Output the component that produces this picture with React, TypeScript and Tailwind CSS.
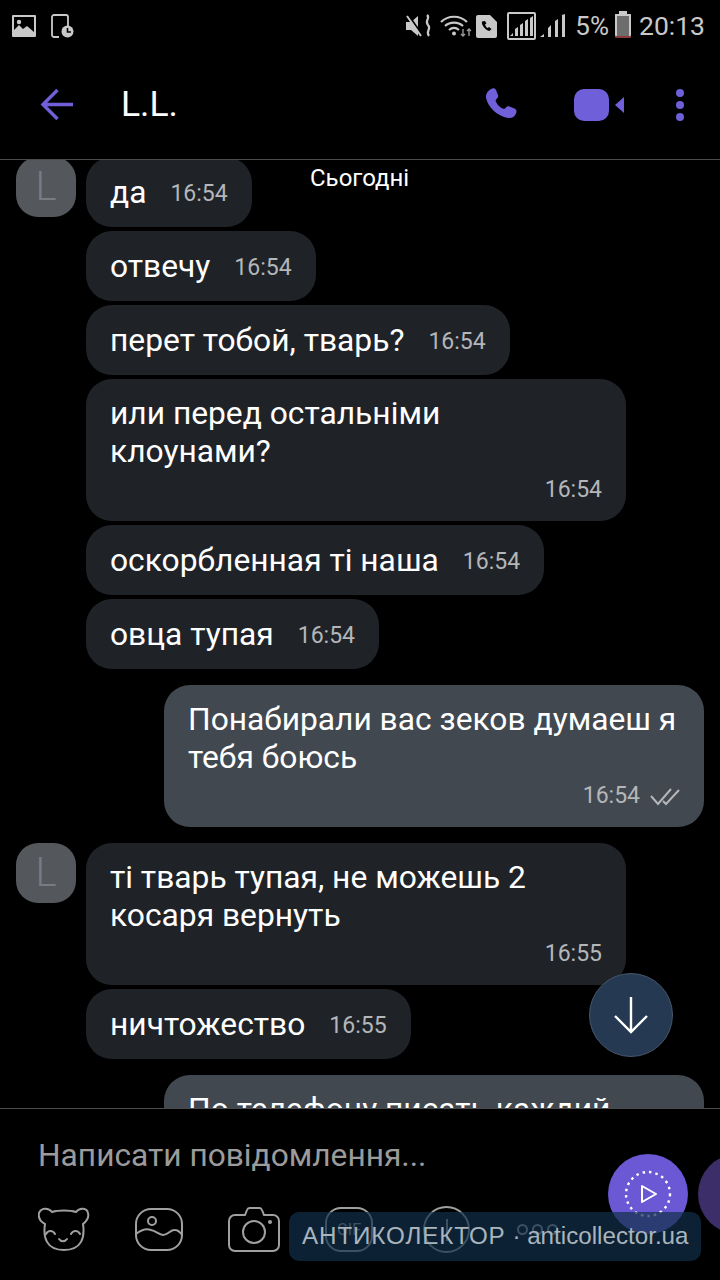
const font = { fontFamily: "Roboto, sans-serif" };

type Msg = { text: string; time: string; wide?: boolean; out?: boolean; avatar?: boolean; read?: boolean };

const messages: Msg[] = [
  { text: "да", time: "16:54", avatar: true },
  { text: "отвечу", time: "16:54" },
  { text: "перет тобой, тварь?", time: "16:54" },
  { text: "или перед остальніми\nклоунами?", time: "16:54", wide: true },
  { text: "оскорбленная ті наша", time: "16:54" },
  { text: "овца тупая", time: "16:54" },
  { text: "Понабирали вас зеков думаеш я\nтебя боюсь", time: "16:54", wide: true, out: true, read: true },
  { text: "ті тварь тупая, не можешь 2\nкосаря вернуть", time: "16:55", wide: true, avatar: true },
  { text: "ничтожество", time: "16:55" },
];

function StatusBar() {
  return (
    <div className="h-[52px] shrink-0 flex items-center justify-between pl-[12px] pr-[15px] text-[#c9c9c9]">
      <div className="flex items-center gap-[15px]">
        <svg width="24" height="22" viewBox="0 0 24 22">
          <path fill="#c9c9c9" fillRule="evenodd" d="M1 0h22a1 1 0 0 1 1 1v20a1 1 0 0 1-1 1H1a1 1 0 0 1-1-1V1a1 1 0 0 1 1-1Zm1 2v13l5-5 4 4 4-3 7 6V2Z" />
          <circle cx="7" cy="7" r="2.2" fill="#c9c9c9" />
        </svg>
        <svg width="23" height="24" viewBox="0 0 23 24">
          <path fill="none" stroke="#c9c9c9" strokeWidth="1.8" d="M8 23H3a2 2 0 0 1-2-2V3a2 2 0 0 1 2-2h12a2 2 0 0 1 2 2v11" />
          <circle cx="16.5" cy="17.5" r="6" fill="#c9c9c9" />
          <path fill="none" stroke="#000" strokeWidth="1.6" d="M16.5 14v4h3.5" />
        </svg>
      </div>
      <div className="flex items-center" style={font}>
        <svg width="26" height="24" viewBox="0 0 26 24" className="mr-[8px]">
          <path fill="#c9c9c9" d="M0 8h5l7-6v20l-7-6H0Z" />
          <path stroke="#000" strokeWidth="2" d="M3 2l14 20" />
          <path stroke="#c9c9c9" strokeWidth="2" d="M1 2l14 20" />
          <path fill="none" stroke="#c9c9c9" strokeWidth="2.2" d="M21 1c4 3-3 6 1 10s-3 6 1 11" />
        </svg>
        <svg width="32" height="24" viewBox="0 0 32 24" className="mr-[4px]">
          <path fill="none" stroke="#c9c9c9" strokeWidth="2.2" d="M1 8c7-7 19-7 26 0M5 12c5-4.500 13-4.500 18 0M9 16c3-2.500 7-2.500 10 0" />
          <circle cx="14" cy="19.500" r="2" fill="#c9c9c9" />
          <path stroke="#9a9a9a" strokeWidth="1.4" fill="none" d="M23 15v7m-2-2 2 2 2-2M29 22v-7m-2 2 2-2 2 2" />
        </svg>
        <svg width="21" height="23" viewBox="0 0 21 23" className="mr-[10px]">
          <path fill="#c9c9c9" d="M2 0h12l7 7v14a2 2 0 0 1-2 2H2a2 2 0 0 1-2-2V2a2 2 0 0 1 2-2Z" />
          <path fill="#000" d="M6 6.500c-1 3 3.500 9 7.500 9.500l2-2-2.500-2-1.500 1c-1-.5-2-2-2.500-3.500l1.500-1L9 6Z" />
        </svg>
        <div className="w-[29px] h-[28px] border-2 border-[#c9c9c9] rounded-[2px] flex items-end justify-center mr-[4px] pb-[2px]">
          <svg width="23" height="20" viewBox="0 0 23 20">
            <path fill="#c9c9c9" d="M0 20l3-3v3ZM5 20v-7l3-2v9ZM10 20V9l3-2v13ZM15 20V5l3-2v17ZM20 20V2l3-2v20Z" />
          </svg>
        </div>
        <svg width="25" height="24" viewBox="0 0 25 24" className="mr-[10px]">
          <path fill="#c9c9c9" d="M0 23l4-3v3ZM8 23V14l3-3v12ZM15 23V7l3-2v18ZM22 23V1l3-1v23Z" />
        </svg>
        <span className="text-[26px] leading-none mr-[6px]">5%</span>
        <div className="relative w-[16px] h-[24px] mr-[8px] bg-[#6d6d6d] rounded-[1px] border-b-[2px] border-b-[#8a3a3a]">
          <div className="absolute -top-[3px] left-[4px] w-[8px] h-[3px] bg-[#c9c9c9]" />
          <div className="absolute inset-0 border-2 border-[#c9c9c9] border-b-0 rounded-[1px]" />
        </div>
        <span className="text-[26.500px] leading-none">20:13</span>
      </div>
    </div>
  );
}

function Header() {
  return (
    <div className="h-[108px] shrink-0 flex items-center border-b border-[#4a4a4a] pb-[1px]">
      <svg width="34" height="34" viewBox="0 0 34 34" className="ml-[40px]">
        <path fill="none" stroke="#6f5fd8" strokeWidth="3.4" d="M33 16.500H3M17.500 2 3 16.500 17.500 31" />
      </svg>
      <span className="ml-[47px] text-[35.500px] leading-none text-white" style={font}>L.L.</span>
      <div className="ml-auto flex items-center">
        <svg width="34" height="34" viewBox="0 0 34 34" className="mr-[55px]">
          <path fill="#6f5fd8" d="M6 1c2-1 4-1 5 1l2 5c.500 1.500 0 3-1.500 4-1 .700-1 1.500-.500 3 1.500 3 3.500 5 6.500 6.500 1.500.500 2.500.500 3-.500 1-1.500 2.500-2 4-1.500l5 2c2 1 2.500 3 1.500 5-1.500 3.500-4 5-8 4.500C12 28 3 19 1 10 .500 6 2.500 3 6 1Z" />
        </svg>
        <svg width="50" height="32" viewBox="0 0 50 32" className="mr-[52px]">
          <rect x="0" y="0" width="35" height="32" rx="10" fill="#6f5fd8" />
          <path fill="#6f5fd8" d="M50 8v16l-9-8Z" />
        </svg>
        <div className="flex flex-col gap-[4px] mr-[36px]">
          <span className="block w-[8px] h-[8px] rounded-full bg-[#6f5fd8]" />
          <span className="block w-[8px] h-[8px] rounded-full bg-[#6f5fd8]" />
          <span className="block w-[8px] h-[8px] rounded-full bg-[#6f5fd8]" />
        </div>
      </div>
    </div>
  );
}

function Avatar() {
  return (
    <div className="absolute left-[16px] top-0 w-[60px] h-[60px] rounded-[22px] bg-[#54575c] flex items-center justify-center">
      <span className="text-[40px] font-light text-[#787b80] leading-none" style={font}>L</span>
    </div>
  );
}

function Bubble({ msg }: { msg: Msg }) {
  const bg = msg.out ? "bg-[#41484f]" : "bg-[#1f2328]";

  if (msg.wide) {
    return (
      <div className={`w-[540px] rounded-[26px] pl-[24px] pr-[24px] pt-[16px] pb-[16px] ${bg}`}>
        <div className="text-[31.750px] leading-[38px] text-white whitespace-pre">{msg.text}</div>
        <div className="flex items-center justify-end h-[34px] pt-[5px] text-[23px] text-[#b4b6b9]">
          <span>{msg.time}</span>
          {msg.read && (
            <svg width="30" height="18" viewBox="0 0 30 18" className="ml-[10px]">
              <path fill="none" stroke="#b4b6b9" strokeWidth="2" d="M1 8l7 8L21 1M13 13l3 3L29 2" />
            </svg>
          )}
        </div>
      </div>
    );
  }

  return (
    <div className={`h-[70px] rounded-[26px] pl-[24px] pr-[24px] pt-[1px] flex items-center gap-[24px] ${bg}`}>
      <span className="text-[31.750px] leading-[38px] text-white">{msg.text}</span>
      <span className="text-[23px] mt-[4px] text-[#b4b6b9]">{msg.time}</span>
    </div>
  );
}

function MessageList() {
  return (
    <div className="relative flex-1 overflow-hidden" style={font}>
      <div className="flex flex-col -mt-[3px]">
        {messages.map((msg, i) => (
          <div
            key={i}
            className={`relative flex shrink-0 ${msg.out ? "justify-end pr-[16px] mt-[12px] mb-[16px]" : "pl-[86px] mb-[4px]"}`}
          >
            {msg.avatar && <Avatar />}
            <Bubble msg={msg} />
          </div>
        ))}
        <div className="flex justify-end pr-[16px] mt-[12px]">
          <div className="w-[540px] h-[70px] rounded-t-[26px] bg-[#41484f] pl-[24px] pt-[16px] text-[31.750px] leading-[38px] text-white">
            По телефону писать каждий
          </div>
        </div>
      </div>
      <span className="absolute left-[310px] top-[4px] text-[24px] leading-[28px] text-white">Сьогодні</span>
      <div className="absolute left-[589px] top-[813px] w-[84px] h-[84px] rounded-full bg-[#253a52] border border-[#46566a] flex items-center justify-center">
        <svg width="36" height="38" viewBox="0 0 36 38">
          <path fill="none" stroke="#fff" strokeWidth="2.4" d="M18 1v35M2 20l16 16 16-16" />
        </svg>
      </div>
    </div>
  );
}

function Composer() {
  return (
    <div className="relative h-[172px] shrink-0 border-t border-[#4a4a4a] overflow-hidden" style={font}>
      <div className="pl-[38px] pt-[29px] text-[31.700px] leading-[36px] text-[#9b9b9b]">Написати повідомлення...</div>
      <div className="absolute left-[38px] top-[97px] flex items-center">
        <svg width="52" height="45" viewBox="0 0 52 45" className="mr-[45px]">
          <g fill="none" stroke="#a0a0a0" strokeWidth="2" strokeLinecap="round">
            <path d="M7 17C2 14 0 10 1 6 3 1 10 0 14 5c6-2 18-2 24 0 4-5 11-4 12 1 1 4-1 8-5 11 2 13-1 26-19 26S5 30 7 17Z" />
            <path d="M8 27c2-4 7-4 9 0M33 27c2-4 7-4 9 0M21 32c2 3 6 3 8 0" />
          </g>
        </svg>
        <svg width="48" height="43" viewBox="0 0 48 43" className="mr-[45px]">
          <g fill="none" stroke="#a0a0a0" strokeWidth="2">
            <rect x="1" y="1" width="46" height="41" rx="15" />
            <circle cx="17" cy="13" r="4" />
            <path d="M1 26c5-4 10-6 15-4 5 1 8 5 12 5 5 0 8-6 12-5 3 0 5 2 7 5" />
          </g>
        </svg>
        <svg width="52" height="45" viewBox="0 0 52 45" className="mr-[45px]">
          <g fill="none" stroke="#a0a0a0" strokeWidth="2">
            <path d="M17 8l2-5a3 3 0 0 1 3-2h9a3 3 0 0 1 3 2l2 5h9a6 6 0 0 1 6 6v24a6 6 0 0 1-6 6H7a6 6 0 0 1-6-6V14a6 6 0 0 1 6-6Z" />
            <circle cx="26" cy="25" r="11" />
          </g>
          <circle cx="42" cy="15" r="2" fill="#a0a0a0" />
        </svg>
        <div className="w-[48px] h-[45px] rounded-[16px] border-2 border-[#a0a0a0] mr-[50px] flex items-center justify-center text-[16px] text-[#a0a0a0]">GIF</div>
        <div className="w-[47px] h-[47px] rounded-full border-2 border-[#a0a0a0] mr-[47px] flex items-center justify-center">
          <span className="block w-[2px] h-[22px] bg-[#a0a0a0]" />
        </div>
        <div className="flex gap-[4px]">
          <span className="block w-[11px] h-[11px] rounded-full border-2 border-[#a0a0a0]" />
          <span className="block w-[11px] h-[11px] rounded-full border-2 border-[#a0a0a0]" />
          <span className="block w-[11px] h-[11px] rounded-full border-2 border-[#a0a0a0]" />
        </div>
      </div>
      <div className="absolute left-[608px] top-[45px] w-[80px] h-[80px] rounded-full bg-[#6a58d4] flex items-center justify-center">
        <svg width="48" height="48" viewBox="0 0 48 48">
          <circle cx="24" cy="24" r="22" fill="none" stroke="#fff" strokeWidth="2.400" strokeDasharray="2.500 4" />
          <path fill="none" stroke="#fff" strokeWidth="2" strokeLinejoin="round" d="M18 16l14 8-14 8Z" />
        </svg>
      </div>
      <div className="absolute left-[698px] top-[45px] w-[80px] h-[80px] rounded-full bg-[#3c2e68]" />
      <div className="absolute left-[289px] top-[103px] w-[412px] h-[49px] rounded-[10px] bg-[#11304a]/70 flex items-center pl-[13px] text-[24.200px] whitespace-pre text-[#a9b4bd]" style={{ fontFamily: "'Liberation Sans', sans-serif" }}>
        <span className="tracking-[0.9px]">АНТИКОЛЕКТОР</span> · anticollector.ua
      </div>
    </div>
  );
}

export default function App() {
  return (
    <div className="w-[720px] h-[1280px] bg-black flex flex-col overflow-hidden">
      <StatusBar />
      <Header />
      <MessageList />
      <Composer />
    </div>
  );
}
